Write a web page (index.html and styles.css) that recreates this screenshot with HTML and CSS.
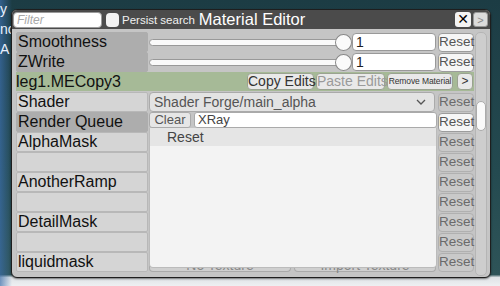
FILE: index.html
```html
<!DOCTYPE html>
<html lang="en">
<head>
    <meta charset="UTF-8">
    <meta name="viewport" content="width=device-width, initial-scale=1.0">
    <title>Material Editor</title>
    <link rel="stylesheet" href="styles.css">
</head>
<body>
    <div class="scene-text">
        <span>y</span>
        <span>nc</span>
        <span>A</span>
    </div>

    <div class="window">
        <div class="titlebar">
            <input class="filter" type="text" placeholder="Filter">
            <span class="checkbox"></span>
            <span class="persist">Persist search</span>
            <span class="title">Material Editor</span>
            <button class="close-btn">&#x2715;</button>
            <button class="more-btn">&gt;</button>
        </div>

        <div class="content">
            <div class="rows">
                <div class="row slider-row">
                    <div class="label dark">Smoothness</div>
                    <div class="slider">
                        <div class="track"></div>
                        <div class="knob"></div>
                    </div>
                    <div class="field">1</div>
                    <button class="reset">Reset</button>
                </div>
                <div class="row slider-row">
                    <div class="label dark">ZWrite</div>
                    <div class="slider">
                        <div class="track"></div>
                        <div class="knob"></div>
                    </div>
                    <div class="field">1</div>
                    <button class="reset">Reset</button>
                </div>
                <div class="row material-row">
                    <div class="material-name">leg1.MECopy3</div>
                    <button class="mat-btn copy">Copy Edits</button>
                    <button class="mat-btn paste disabled">Paste Edits</button>
                    <button class="mat-btn remove">Remove Material</button>
                    <button class="mat-btn arrow">&gt;</button>
                </div>
                <div class="row">
                    <div class="label">Shader</div>
                    <div class="dropdown">
                        <span>Shader Forge/main_alpha</span>
                        <svg class="chevron" width="10" height="6" viewBox="0 0 10 6"><path d="M1 1 L5 5 L9 1" fill="none" stroke="#555" stroke-width="1.3"/></svg>
                    </div>
                    <button class="reset dim">Reset</button>
                </div>
                <div class="row">
                    <div class="label dark">Render Queue</div>
                    <div class="wide"></div>
                    <button class="reset">Reset</button>
                </div>
                <div class="row">
                    <div class="label">AlphaMask</div>
                    <div class="wide"></div>
                    <button class="reset dim">Reset</button>
                </div>
                <div class="row">
                    <div class="label"></div>
                    <div class="wide"></div>
                    <button class="reset dim">Reset</button>
                </div>
                <div class="row">
                    <div class="label">AnotherRamp</div>
                    <div class="wide"></div>
                    <button class="reset dim">Reset</button>
                </div>
                <div class="row">
                    <div class="label"></div>
                    <div class="wide"></div>
                    <button class="reset dim">Reset</button>
                </div>
                <div class="row">
                    <div class="label">DetailMask</div>
                    <div class="wide"></div>
                    <button class="reset dim">Reset</button>
                </div>
                <div class="row">
                    <div class="label"></div>
                    <div class="wide"></div>
                    <button class="reset dim">Reset</button>
                </div>
                <div class="row">
                    <div class="label">liquidmask</div>
                    <div class="tex-btns">
                        <button class="tex-btn">No Texture</button>
                        <button class="tex-btn">Import Texture</button>
                    </div>
                    <button class="reset dim">Reset</button>
                </div>
            </div>

            <div class="scrollbar">
                <div class="thumb"></div>
            </div>

            <!-- render queue popup -->
            <div class="popup">
                <div class="popup-search">
                    <button class="clear-btn">Clear</button>
                    <div class="search-field">XRay</div>
                </div>
                <div class="popup-list">
                    <div class="popup-item">Reset</div>
                </div>
            </div>
        </div>
    </div>
</body>
</html>
```

FILE: styles.css
```css
body {
    margin: 0;
    padding: 0;
    width: 500px;
    height: 286px;
    overflow: hidden;
    position: relative;
    font-family: 'Liberation Sans', Arial, sans-serif;
    background:
        linear-gradient(to right, rgba(60, 110, 170, 0.7) 0, rgba(60, 110, 170, 0) 12px),
        linear-gradient(to bottom, #1c3c44 0, #244a50 60%, #2e5458 96%, #dfe3e6 97%, #eef0f2 100%);
}

.scene-text {
    position: absolute;
    left: 0;
    top: 2px;
    display: flex;
    flex-direction: column;
    gap: 6px;
    color: #e8f0ff;
    font-size: 14px;
    line-height: 14px;
}

.window {
    position: relative;
    margin: 9px 0 0 11px;
    width: 478px;
    height: 267px;
    border: 1px solid #1e1e1e;
    border-radius: 6px;
    background-color: #c5c5c5;
    overflow: hidden;
    box-shadow: 0 1px 2px rgba(0, 0, 0, 0.5);
}

.titlebar {
    height: 19px;
    background-color: #4b4b4b;
    display: flex;
    align-items: center;
    padding: 0 2px 0 1px;
}

.filter {
    width: 81px;
    height: 14px;
    margin: 0;
    padding: 0 3px;
    border: 1px solid #9a9a9a;
    border-radius: 4px;
    font-family: inherit;
    font-size: 12px;
    font-style: italic;
    box-sizing: content-box;
}

.filter::placeholder {
    color: #a8a8a8;
}

.checkbox {
    width: 13px;
    height: 14px;
    margin-left: 4px;
    background-color: #f2f2f2;
    border-radius: 4px;
}

.persist {
    margin-left: 3px;
    color: #f0f0f0;
    font-size: 11.5px;
}

.title {
    margin-left: 4px;
    color: #ffffff;
    font-size: 16.5px;
}

.close-btn {
    margin-left: auto;
    width: 16px;
    height: 15px;
    padding: 0;
    border: none;
    border-radius: 3px;
    background-color: #f4f4f4;
    color: #000;
    font-size: 14px;
    font-weight: bold;
    line-height: 15px;
    font-family: 'DejaVu Sans', sans-serif;
}

.more-btn {
    margin-left: 2px;
    width: 15px;
    height: 15px;
    padding: 0;
    border: 1px solid #999;
    border-radius: 3px;
    background-color: #dcdcdc;
    color: #888;
    font-size: 11px;
    line-height: 12px;
}

.content {
    position: relative;
    display: flex;
    padding: 3px 3px 0 4px;
}

.rows {
    width: 458px;
    display: flex;
    flex-direction: column;
    gap: 1px;
}

.row {
    display: grid;
    grid-template-columns: 132px 1fr 36px;
    align-items: center;
    height: 19px;
}

.slider-row {
    grid-template-columns: 132px 204px 86px 36px;
}

.label {
    height: 18px;
    padding-left: 1px;
    background-color: #d5d5d5;
    border: 1px solid #b8b8b8;
    border-radius: 2px;
    color: #111;
    font-size: 16px;
    line-height: 18px;
    white-space: nowrap;
    overflow: hidden;
}

.label.dark {
    background-color: #adadad;
    border-color: #adadad;
}

.slider {
    display: flex;
    align-items: center;
    height: 19px;
}

.track {
    width: 194px;
    height: 5px;
    margin-left: 1px;
    background-color: #fafafa;
    border: 1px solid #999;
    border-radius: 4px;
}

.knob {
    width: 15px;
    height: 15px;
    margin-left: -9px;
    background-color: #fafafa;
    border: 1px solid #888;
    border-radius: 50%;
}

.field {
    height: 16px;
    margin-right: 2px;
    padding-left: 3px;
    background-color: #fff;
    border: 1px solid #999;
    border-radius: 4px;
    font-size: 14px;
    line-height: 16px;
    color: #222;
}

.reset {
    height: 19px;
    padding: 0;
    border: 1px solid #9c9c9c;
    border-radius: 4px;
    background-color: #f6f6f6;
    color: #555;
    font-family: inherit;
    font-size: 13.5px;
    line-height: 16px;
}

.reset.dim {
    background-color: #c9c9c9;
    border-color: #b0b0b0;
    color: #6a6a6a;
}

.material-row {
    display: flex;
    align-items: center;
    gap: 2px;
    padding-right: 1px;
    background-color: #a6ba97;
}

.material-name {
    flex: 1;
    color: #111;
    font-size: 16px;
    line-height: 19px;
}

.mat-btn {
    height: 17px;
    padding: 0;
    border: 1px solid #9aa291;
    border-radius: 4px;
    background-color: #e9e9e9;
    color: #333;
    font-family: inherit;
    font-size: 14px;
    line-height: 15px;
    white-space: nowrap;
}

.mat-btn.copy {
    width: 67px;
}

.mat-btn.paste {
    width: 69px;
}

.mat-btn.disabled {
    color: #9a9a9a;
}

.mat-btn.remove {
    width: 66px;
    font-size: 8.5px;
    letter-spacing: -0.1px;
}

.mat-btn.arrow {
    width: 16px;
    margin-left: 2px;
    font-size: 12px;
}

.dropdown {
    display: flex;
    align-items: center;
    justify-content: space-between;
    height: 18px;
    margin: 0 3px 0 1px;
    padding: 0 8px 0 4px;
    background-color: #e3e3e3;
    border: 1px solid #aaa;
    border-radius: 4px;
    color: #555;
    font-size: 14px;
}

.wide {
    height: 19px;
}

.tex-btns {
    display: flex;
    gap: 3px;
    margin: 0 2px 0 1px;
}

.tex-btn {
    flex: 1;
    height: 19px;
    padding: 5px 0 0;
    border: 1px solid #aaa;
    border-top: none;
    border-radius: 0 0 4px 4px;
    background-color: #cfcfcf;
    color: #888;
    font-family: inherit;
    font-size: 14px;
    line-height: 14px;
}

.scrollbar {
    width: 11px;
    height: 242px;
    margin-left: 1px;
    background-color: #cdcdcd;
    border: 1px solid #b5b5b5;
    border-radius: 5px;
}

.thumb {
    margin-top: 68px;
    height: 28px;
    background-color: #fafafa;
    border: 1px solid #aaa;
    border-radius: 5px;
}

.popup {
    position: absolute;
    left: 137px;
    top: 83px;
    width: 288px;
    height: 156px;
    display: flex;
    flex-direction: column;
}

.popup-search {
    display: flex;
    gap: 3px;
    height: 16px;
}

.clear-btn {
    width: 42px;
    height: 16px;
    padding: 0;
    border: 1px solid #aaa;
    border-radius: 3px;
    background-color: #e6e6e6;
    color: #555;
    font-family: inherit;
    font-size: 13px;
    line-height: 14px;
}

.search-field {
    flex: 1;
    padding-left: 3px;
    background-color: #fff;
    border: 1px solid #aaa;
    border-radius: 3px;
    color: #444;
    font-size: 13px;
    line-height: 14px;
}

.popup-list {
    flex: 1;
    background-color: #f3f3f3;
    border: 1px solid #bbb;
    border-top: none;
    border-radius: 0 0 4px 4px;
}

.popup-item {
    height: 18px;
    padding-left: 17px;
    background-color: #e5e5e5;
    color: #444;
    font-size: 14px;
    line-height: 18px;
}
```
